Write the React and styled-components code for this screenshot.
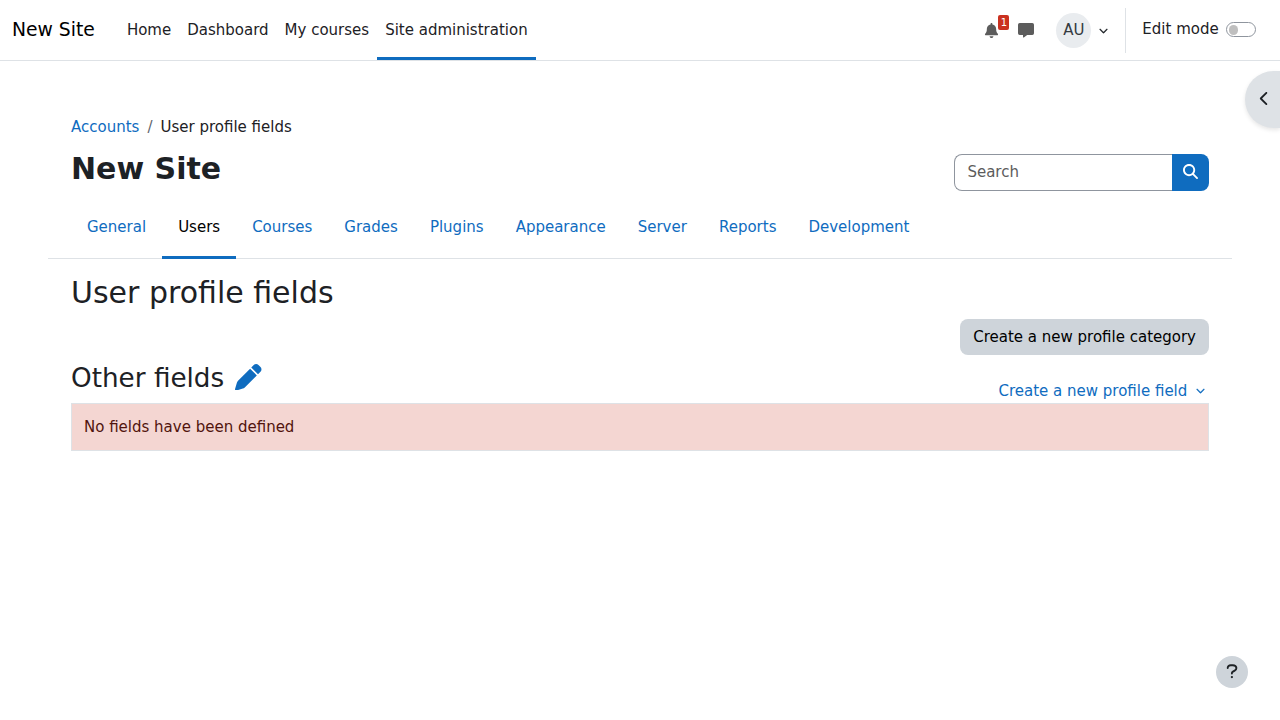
import React from 'react';
import styled, { createGlobalStyle } from 'styled-components';
import { FaBell, FaChevronDown, FaChevronLeft, FaMagnifyingGlass, FaPen } from 'react-icons/fa6';

const GlobalStyle = createGlobalStyle`
  *, *::before, *::after { box-sizing: border-box; }
  body {
    margin: 0;
    background: #fff;
    color: #1d2125;
    font: 400 15px/22.5px "DejaVu Sans", sans-serif;
    overflow: hidden;
  }
  h1, h2, h3, p { margin: 0; }
  a { color: #0f6cbf; text-decoration: none; }
  button, input { font: inherit; }
  svg { display: block; }
`;

const Navbar = styled.nav`
  display: flex;
  height: 61px;
  border-bottom: 1px solid #dee2e6;
  padding-left: 12px;
  padding-right: 24px;
`;

const Brand = styled.a`
  && { color: #000; }
  align-self: center;
  font-size: 18.75px;
  line-height: 28px;
  margin-right: 24px;
  width: 82.9px;
  white-space: nowrap;
`;

const NavLink = styled.a`
  && { color: #1d2125; }
  height: 60px;
  padding: 18.5px 8px 0;
  white-space: nowrap;
  border-bottom: 3px solid ${(p) => (p.$active ? '#0f6cbf' : 'transparent')};
`;

const UserNav = styled.div`
  display: flex;
  align-items: center;
  height: 60px;
  margin-left: auto;
  color: #5c5c5c;
`;

const Notifications = styled.div`
  position: relative;
  margin-right: 18.6px;
`;

const Count = styled.span`
  position: absolute;
  left: 14px;
  top: -8px;
  width: 11px;
  height: 15px;
  border-radius: 2px;
  background: #ca3120;
  color: #fff;
  font-size: 10px;
  line-height: 15px;
  text-align: center;
`;

const Avatar = styled.span`
  width: 35px;
  height: 35px;
  border-radius: 50%;
  background: #e9ecef;
  color: #343a40;
  line-height: 35px;
  text-align: center;
  padding-left: 0.6px;
  margin: 0 8px 0 22px;
`;

const EditMode = styled.label`
  display: flex;
  align-items: center;
  height: 45px;
  margin-left: 17px;
  padding: 0 0 2px 16.4px;
  border-left: 1px solid #dee2e6;
  color: #1d2125;
`;

const Toggle = styled.span`
  width: 30px;
  height: 15px;
  margin: 1px 0 0 7.3px;
  padding: 2px 1.5px;
  border: 1px solid #8f959e;
  border-radius: 15px;
  &::before {
    content: "";
    display: block;
    width: 9.5px;
    height: 9.5px;
    border-radius: 50%;
    background: #bfbfbf;
  }
`;

const Caret = styled(FaChevronDown)`
  stroke: currentColor;
  stroke-width: 12px;
  overflow: visible;
`;

const Page = styled.main`
  padding: 55px 71px 0;
`;

const Breadcrumb = styled.nav`
  display: flex;
  gap: 8px;
  span { color: #5f666d; }
`;

const Heading = styled.header`
  display: flex;
  justify-content: space-between;
  height: 52px;
  margin-top: 15px;
`;

const SiteTitle = styled.h1`
  font-size: 30px;
  line-height: 36px;
  font-weight: 700;
  margin-top: -3px;
`;

const Search = styled.form`
  display: flex;
  width: 255px;
  height: 37px;
`;

const SearchInput = styled.input`
  flex: 1;
  min-width: 0;
  border: 1px solid #8f959e;
  border-right: 0;
  border-radius: 8px 0 0 8px;
  padding: 0 12px 0 12.4px;
  &::placeholder { color: #5c5c5c; opacity: 1; }
`;

const SearchButton = styled.button`
  display: grid;
  place-items: center;
  width: 37px;
  padding: 0 0 2px;
  border: 0;
  border-radius: 0 8px 8px 0;
  background: #0f6cbf;
  color: #fff;
`;

const Tabs = styled.nav`
  display: flex;
  height: 53px;
  margin: 0 -23px;
  padding: 0 23px;
  border-bottom: 1px solid #dee2e6;
`;

const Tab = styled.a`
  && { color: ${(p) => (p.$active ? '#000' : '#0f6cbf')}; }
  height: 53px;
  padding: 10px 16px 0;
  border-bottom: 3px solid ${(p) => (p.$active ? '#0f6cbf' : 'transparent')};
`;

const PageTitle = styled.h2`
  font-size: 30px;
  line-height: 36px;
  font-weight: 400;
  margin: 16px 0 8px;
`;

const Actions = styled.div`
  display: flex;
  justify-content: flex-end;
`;

const CategoryButton = styled.button`
  height: 36px;
  padding: 1px 13px 0;
  border: 0;
  border-radius: 8px;
  background: #ced4da;
  color: #000;
`;

const CategoryRow = styled.div`
  display: flex;
  justify-content: space-between;
  height: 48px;
  padding-right: 4px;
`;

const CategoryTitle = styled.h3`
  display: flex;
  font-size: 26.25px;
  line-height: 32px;
  font-weight: 400;
  margin-top: 7px;
  a { margin: 2px 0 0 11px; }
`;

const FieldMenu = styled.a`
  display: flex;
  align-items: center;
  gap: 8.7px;
  height: 23px;
  margin-top: 25px;
  svg { margin-bottom: 1px; }
`;

const EmptyNotice = styled.p`
  height: 48px;
  border: 1px solid #dee2e6;
  background: #f4d6d2;
  color: #51140d;
  padding: 12px;
`;

const DrawerToggle = styled.button`
  position: fixed;
  top: 71px;
  right: 0;
  display: flex;
  align-items: center;
  width: 35px;
  height: 57px;
  padding: 0 0 2px 12px;
  border: 0;
  border-radius: 28.5px 0 0 28.5px;
  background: #dee2e6;
  color: #1d2125;
  box-shadow: 0 2px 4px rgba(0, 0, 0, 0.1);
`;

const HelpButton = styled.button`
  position: fixed;
  right: 32px;
  bottom: 32px;
  display: grid;
  place-items: center;
  width: 32px;
  height: 32px;
  padding: 0 0 1px;
  border: 0;
  border-radius: 50%;
  background: #ced4da;
  color: #1d2125;
`;

const navItems = ['Home', 'Dashboard', 'My courses', 'Site administration'];
const tabs = ['General', 'Users', 'Courses', 'Grades', 'Plugins', 'Appearance', 'Server', 'Reports', 'Development'];

const MessageIcon = () => (
  <svg width="16" height="16" viewBox="0 0 16 16" fill="currentColor">
    <path d="M1.7 1h12.6A1.7 1.7 0 0 1 16 2.700v8.600a1.700 1.700 0 0 1-1.700 1.700H9.200l-3.400 2.400a.5.5 0 0 1-.8-.4v-2H1.700A1.700 1.700 0 0 1 0 11.300V2.700A1.700 1.700 0 0 1 1.700 1z" />
  </svg>
);

const QuestionIcon = () => (
  <svg width="12" height="15" viewBox="0 0 12 15" fill="none" stroke="currentColor" strokeWidth="1.9" strokeLinecap="round" strokeLinejoin="round">
    <path d="M1.700 4.100C1.700 2.300 3 1.200 4.700 1.200h2.200c2 0 3.500 1.200 3.500 2.900 0 1.200-.7 2-1.700 2.500L7 7.600c-.7.400-1.100.8-1.100 1.500v.4" />
    <circle cx="5.9" cy="13.100" r="1.150" fill="currentColor" stroke="none" />
  </svg>
);

export default function App() {
  return (
    <>
      <GlobalStyle />
      <Navbar>
        <Brand href="#">New Site</Brand>
        {navItems.map((item) => (
          <NavLink key={item} href="#" $active={item === 'Site administration'}>{item}</NavLink>
        ))}
        <UserNav>
          <Notifications>
            <FaBell size={15} />
            <Count>1</Count>
          </Notifications>
          <MessageIcon />
          <Avatar>AU</Avatar>
          <Caret size={9} color="#1d2125" />
          <EditMode>
            Edit mode
            <Toggle />
          </EditMode>
        </UserNav>
      </Navbar>
      <Page>
        <Breadcrumb>
          <a href="#">Accounts</a>
          <span>/</span>
          User profile fields
        </Breadcrumb>
        <Heading>
          <SiteTitle>New Site</SiteTitle>
          <Search>
            <SearchInput placeholder="Search" />
            <SearchButton type="button" aria-label="Search"><FaMagnifyingGlass size={15} /></SearchButton>
          </Search>
        </Heading>
        <Tabs>
          {tabs.map((tab) => (
            <Tab key={tab} href="#" $active={tab === 'Users'}>{tab}</Tab>
          ))}
        </Tabs>
        <PageTitle>User profile fields</PageTitle>
        <Actions>
          <CategoryButton>Create a new profile category</CategoryButton>
        </Actions>
        <CategoryRow>
          <CategoryTitle>
            Other fields
            <a href="#" aria-label="Edit"><FaPen size={26.5} /></a>
          </CategoryTitle>
          <FieldMenu href="#">
            Create a new profile field
            <Caret size={9} />
          </FieldMenu>
        </CategoryRow>
        <EmptyNotice>No fields have been defined</EmptyNotice>
      </Page>
      <DrawerToggle aria-label="Open block drawer"><FaChevronLeft size={15} /></DrawerToggle>
      <HelpButton aria-label="Help"><QuestionIcon /></HelpButton>
    </>
  );
}
